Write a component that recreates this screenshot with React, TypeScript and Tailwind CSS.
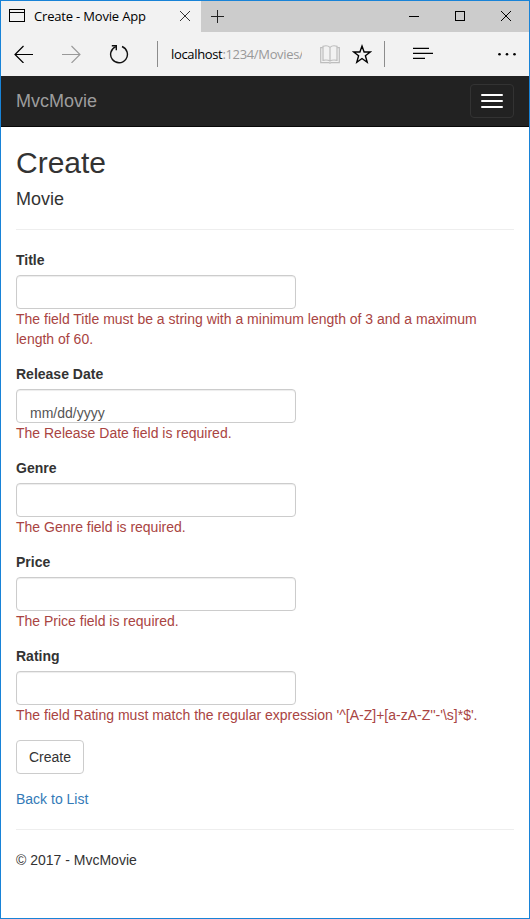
import React from "react";

const chromeFont = "font-['Open_Sans','Noto_Sans',sans-serif]";

function TabBar() {
  return (
    <div className="flex h-[31px] items-start bg-[#cccccc]">
      <div className="flex h-[31px] w-[200px] items-start bg-[#f2f2f2] pl-2">
        <svg className="mt-2" width="16" height="13" viewBox="0 0 16 13" fill="none" stroke="#000" shapeRendering="crispEdges">
          <rect x="0.5" y="0.5" width="15" height="12" />
          <path d="M0 3.5H16" />
        </svg>
        <span className={`${chromeFont} mt-[6px] ml-[9px] w-[135px] whitespace-nowrap text-[13px] leading-[18px] tracking-[-0.18px] text-black`}>
          Create - Movie App
        </span>
        <svg className="ml-[11px] mt-[10px]" width="10" height="10" viewBox="0 0 10 10" stroke="#333" strokeWidth="1">
          <path d="M0 0L10 10M10 0L0 10" />
        </svg>
      </div>
      <svg className="ml-[10px] mt-[9px]" width="13" height="13" viewBox="0 0 13 13" stroke="#222" shapeRendering="crispEdges">
        <path d="M6.5 0V13M0 6.5H13" />
      </svg>
      <div className="ml-auto mr-[18px] mt-[10px] flex items-center gap-9">
        <svg width="10" height="10" viewBox="0 0 10 10" stroke="#000" shapeRendering="crispEdges">
          <path d="M0 5.5H10" />
        </svg>
        <svg width="10" height="10" viewBox="0 0 10 10" fill="none" stroke="#000" shapeRendering="crispEdges">
          <rect x="0.5" y="0.5" width="9" height="9" />
        </svg>
        <svg width="10" height="10" viewBox="0 0 10 10" stroke="#000">
          <path d="M0 0L10 10M10 0L0 10" />
        </svg>
      </div>
    </div>
  );
}

function AddressBar() {
  return (
    <div className="flex h-11 items-center bg-[#f2f2f2] pl-[13px]">
      <svg width="19" height="18" viewBox="0 0 19 18" fill="none" stroke="#000" strokeWidth="1.2">
        <path d="M19 9.5H1M9.5 1L1 9.5L9.5 18" />
      </svg>
      <svg className="ml-[29px]" width="19" height="18" viewBox="0 0 19 18" fill="none" stroke="#999" strokeWidth="1.1">
        <path d="M0 9.5H18M9.5 1L18 9.5L9.5 18" />
      </svg>
      <svg className="ml-[28px]" width="20" height="20" viewBox="0 0 20 20" fill="none" stroke="#111" strokeWidth="1.4">
        <path d="M13 2.5A8.4 8.4 0 1 1 6.8 2.6" />
        <path d="M2.8 1.7H7.3V6.2" />
      </svg>
      <div className="ml-7 h-[26px] w-px bg-[#8c8c8c]" />
      <div className={`${chromeFont} ml-[13px] w-[131px] overflow-hidden whitespace-nowrap text-[13px] leading-[18px] tracking-[-0.34px] text-[#999]`}>
        <span className="text-black">localhost</span>:1234/Movies/
      </div>
      <svg className="ml-[18px]" width="20" height="19" viewBox="0 0 20 19" fill="none" stroke="#bdbdbd" strokeWidth="1.2">
        <path d="M2.8 2.6H0.7V17.6H9L10 18.2L11 17.6H19.3V2.6H17.2" />
        <path d="M10 2.4C8.4 0.8 5 0.6 3 1.3V15.3C5 14.9 8.4 15 10 16.1C11.6 15 15 14.9 17 15.3V1.3C15 0.6 11.6 0.8 10 2.4ZM10 2.4V16.1" />
      </svg>
      <svg className="ml-3" width="20" height="20" viewBox="0 0 20 20" fill="none" stroke="#000" strokeWidth="1.4">
        <path d="M10 2.1L12.1 8H18.3L13.4 11.8L15.2 18.2L10 14.5L4.8 18.2L6.6 11.8L1.7 8H7.9Z" />
      </svg>
      <div className="ml-3 h-[26px] w-px bg-[#8c8c8c]" />
      <svg className="ml-7" width="20" height="14" viewBox="0 0 20 14" shapeRendering="crispEdges">
        <path d="M0 0.5H16M0 5.5H20M0 10.5H12" stroke="#b5b5b5" />
        <path d="M0 1.5H16M0 6.5H20M0 11.5H12" stroke="#000" />
      </svg>
      <svg className="ml-[65px]" width="18" height="4" viewBox="0 0 18 4">
        <circle cx="1.5" cy="2.2" r="1.3" />
        <circle cx="9" cy="2.2" r="1.3" />
        <circle cx="16.5" cy="2.2" r="1.3" />
      </svg>
    </div>
  );
}

function Navbar() {
  return (
    <nav className="flex h-[51px] items-center justify-between border-b border-[#080808] bg-[#222] px-[15px]">
      <a className="text-[18px] leading-5 text-[#9d9d9d]">MvcMovie</a>
      <button className="flex h-[34px] w-11 flex-col items-center justify-center gap-1 rounded border border-[#333]">
        <span className="h-0.5 w-[22px] rounded-[1px] bg-white" />
        <span className="h-0.5 w-[22px] rounded-[1px] bg-white" />
        <span className="h-0.5 w-[22px] rounded-[1px] bg-white" />
      </button>
    </nav>
  );
}

function Field({ label, error, hint }: { label: string; error: string; hint?: string }) {
  return (
    <div className="mb-[15px]">
      <label className="mb-[5px] block font-bold">{label}</label>
      <div className="h-[34px] w-[280px] overflow-hidden rounded border border-[#ccc] bg-white pl-[13px] pt-[13px] text-[#555] shadow-[inset_0_1px_1px_rgba(0,0,0,0.075)]">
        {hint}
      </div>
      <p className="text-[#a94442]">{error}</p>
    </div>
  );
}

export default function App() {
  return (
    <div className="h-[919px] w-[530px] overflow-hidden border border-[#1883d7] bg-white font-['Liberation_Sans',Arial,sans-serif] text-[14px] leading-5 text-[#333]">
      <TabBar />
      <AddressBar />
      <Navbar />
      <main className="px-[15px] pt-[19px]">
        <h2 className="text-[30px] leading-[33px]">Create</h2>
        <h4 className="mt-[11px] text-[18px] leading-[19px]">Movie</h4>
        <hr className="my-5 border-[#eee]" />
        <Field label="Title" error="The field Title must be a string with a minimum length of 3 and a maximum length of 60." />
        <Field label="Release Date" hint="mm/dd/yyyy" error="The Release Date field is required." />
        <Field label="Genre" error="The Genre field is required." />
        <Field label="Price" error="The Price field is required." />
        <Field label="Rating" error={"The field Rating must match the regular expression '^[A-Z]+[a-zA-Z''-'\\s]*$'."} />
        <button className="block h-[34px] w-[68px] rounded border border-[#ccc] bg-white">Create</button>
        <a className="mt-[15px] block text-[#337ab7]">Back to List</a>
        <hr className="my-5 border-[#eee]" />
        <footer>© 2017 - MvcMovie</footer>
      </main>
    </div>
  );
}
